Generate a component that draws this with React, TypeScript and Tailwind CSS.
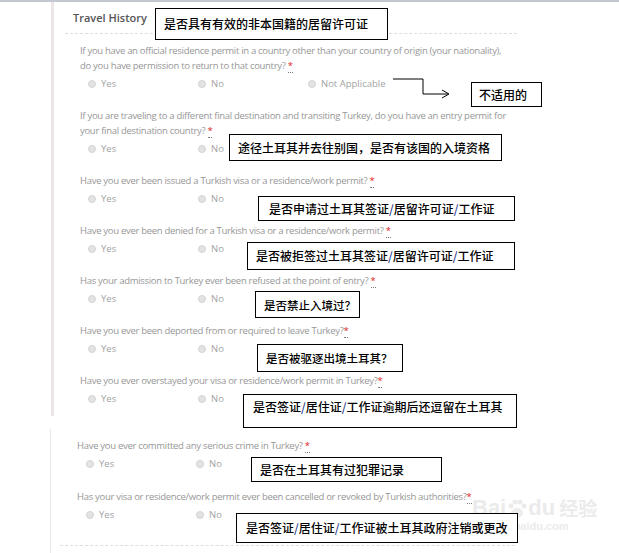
import React from 'react'

type Q = { lines: string[]; star: string; na?: boolean }

const top: Q[] = [
  {
    lines: [
      'If you have an official residence permit in a country other than your country of origin (your nationality),',
      'do you have permission to return to that country?',
    ],
    star: ' ',
    na: true,
  },
  {
    lines: [
      'If you are traveling to a different final destination and transiting Turkey, do you have an entry permit for',
      'your final destination country?',
    ],
    star: ' ',
  },
  { lines: ['Have you ever been issued a Turkish visa or a residence/work permit?'], star: ' ' },
  { lines: ['Have you ever been denied for a Turkish visa or a residence/work permit?'], star: ' ' },
  { lines: ['Has your admission to Turkey ever been refused at the point of entry?'], star: ' ' },
  { lines: ['Have you ever been deported from or required to leave Turkey?'], star: '' },
  { lines: ['Have you ever overstayed your visa or residence/work permit in Turkey?'], star: '' },
]

const bottom: Q[] = [
  { lines: ['Have you ever committed any serious crime in Turkey?'], star: ' ' },
  { lines: ['Has your visa or residence/work permit ever been cancelled or revoked by Turkish authorities?'], star: '' },
]

function Radio({ label }: { label: string }) {
  return (
    <div className="flex w-[110px] items-center gap-[5px]">
      <span className="h-[8px] w-[8px] rounded-full border border-[#d4d4d4] bg-[#e3e3e3]" />
      <span className="text-[9.5px] text-[#a3a3a3]">{label}</span>
    </div>
  )
}

function Question({ q, indent }: { q: Q; indent: string }) {
  return (
    <div>
      <p className="m-0 text-[9.5px] leading-[15px] tracking-[-0.3px] text-[#979797]">
        {q.lines.map((l, i) => (
          <span key={i} className="block">
            {l}
            {i === q.lines.length - 1 && (
              <>
                {q.star}
                <abbr className="border-b border-dotted border-[#777] text-[#e02020] no-underline">*</abbr>
              </>
            )}
          </span>
        ))}
      </p>
      <div className={`mt-[4px] flex h-[14px] items-center ${indent}`}>
        <Radio label="Yes" />
        <Radio label="No" />
        {q.na && <Radio label="Not Applicable" />}
      </div>
    </div>
  )
}

function Slashed({ text }: { text: string }) {
  const parts = text.split('/')
  return (
    <>
      {parts.map((p, i) => (
        <React.Fragment key={i}>
          {i > 0 && <span className="text-[#1f3a8a]">/</span>}
          {p}
        </React.Fragment>
      ))}
    </>
  )
}

export default function App() {
  return (
    <div
      className="relative h-[553px] w-[619px] overflow-hidden bg-white"
      style={{ fontFamily: '"Open Sans", "Liberation Sans", sans-serif' }}
    >
      <div className="h-[2px] bg-[#c4c8d0]" />

      <div className="ml-[51px] w-[470px] border-l-[3px] border-[#ece6e7] pb-[10px]">
        <div className="ml-[11px] w-[452px]">
          <div className="border-b border-dashed border-[#dedede] pb-[8px] pl-2 pt-[9px] text-[11px] font-semibold leading-[14px] text-[#555]">
            Travel History
          </div>
          <div className="flex flex-col gap-[17px] pl-[15px] pt-[9px]">
            {top.map((q, i) => (
              <Question key={i} q={q} indent="pl-[8px]" />
            ))}
          </div>
        </div>
      </div>

      <div className="ml-[50px] mt-[12.5px] w-[480px] border-l border-[#e6e6e6] pb-[12px]">
        <div className="flex flex-col gap-[18px] pl-[26px] pt-[9.5px]">
          {bottom.map((q, i) => (
            <Question key={i} q={q} indent="pl-[9px]" />
          ))}
        </div>
        <div className="ml-[9px] mt-[23px] w-[455px] border-t border-dashed border-[#dedede]" />
      </div>

      {/* watermark */}
      <div
        className="pointer-events-none absolute left-[472px] top-[496px] flex flex-col items-start text-[#ebebeb]"
        style={{ fontFamily: '"Liberation Sans", sans-serif' }}
      >
        <div className="flex items-end text-[22px] font-bold leading-[24px]">
          <span>Bai</span>
          <svg width="20" height="22" viewBox="0 0 20 22" className="mx-[1px]">
            <ellipse cx="10" cy="15" rx="6" ry="5" fill="#ececec" />
            <circle cx="4" cy="8" r="2.5" fill="#ececec" />
            <circle cx="8" cy="4" r="2.5" fill="#ececec" />
            <circle cx="13" cy="4" r="2.5" fill="#ececec" />
            <circle cx="17" cy="8" r="2.5" fill="#ececec" />
          </svg>
          <span>du</span>
          <span className="ml-[4px] text-[19px]" style={{ fontFamily: '"Noto Sans CJK SC", sans-serif' }}>
            经验
          </span>
        </div>
        <div className="text-[11px] font-bold leading-[13px]">jingyan.baidu.com</div>
      </div>

      {/* annotations */}
      <div style={{ fontFamily: '"Noto Sans CJK SC", sans-serif' }} className="text-[12px] font-medium leading-[16px] text-black">
        <div className="absolute left-[155px] top-[8px] flex h-[32px] w-[233px] items-center border border-black bg-white pl-[8px]">
          是否具有有效的非本国籍的居留许可证
        </div>
        <div className="absolute left-[471px] top-[82px] flex h-[25px] w-[71px] items-center border border-black bg-white pl-[7px]">
          不适用的
        </div>
        <div className="absolute left-[229px] top-[134px] flex h-[27px] w-[273px] items-center border border-black bg-white pl-[8px]">
          途径土耳其并去往别国，是否有该国的入境资格
        </div>
        <div className="absolute left-[258px] top-[196px] flex h-[25px] w-[257px] items-center border border-black bg-white pl-[10px]">
          <Slashed text="是否申请过土耳其签证/居留许可证/工作证" />
        </div>
        <div className="absolute left-[247px] top-[242px] flex h-[28px] w-[268px] items-center border border-black bg-white pl-[8px]">
          <Slashed text="是否被拒签过土耳其签证/居留许可证/工作证" />
        </div>
        <div className="absolute left-[255px] top-[291px] flex h-[27px] w-[105px] items-center border border-black bg-white pl-[8px] text-[11.5px]">
          是否禁止入境过？
        </div>
        <div className="absolute left-[257px] top-[344px] flex h-[28px] w-[146px] items-center border border-black bg-white pl-[8px] text-[11.5px]">
          是否被驱逐出境土耳其？
        </div>
        <div className="absolute left-[243px] top-[394px] h-[34px] w-[274px] border border-black bg-white pl-[9px] pt-[4px]">
          <Slashed text="是否签证/居住证/工作证逾期后还逗留在土耳其" />
        </div>
        <div className="absolute left-[251px] top-[457px] flex h-[25px] w-[191px] items-center border border-black bg-white pl-[8px]">
          是否在土耳其有过犯罪记录
        </div>
        <div className="absolute left-[236px] top-[513px] flex h-[30px] w-[282px] items-center border border-black bg-white pl-[9px]">
          <Slashed text="是否签证/居住证/工作证被土耳其政府注销或更改" />
        </div>
      </div>

      <svg className="absolute left-[390px] top-[74px]" width="64" height="28" viewBox="0 0 64 28" fill="none">
        <path d="M3 5H33V20H58" stroke="#000" strokeWidth="1" />
        <path d="M52 16L59 20L52 24" stroke="#000" strokeWidth="1" />
      </svg>
    </div>
  )
}
